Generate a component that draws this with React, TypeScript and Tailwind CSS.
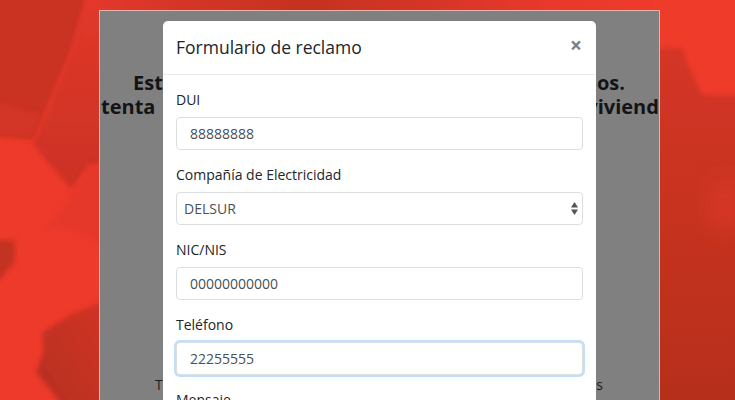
export default function App() {
  const font = { fontFamily: '"Open Sans", "Noto Sans", sans-serif' };
  const inputCls = "flex items-center h-[33px] w-full rounded-[4px] border border-[#dcdfe2] bg-white text-[14px] text-[#495057]";
  const labelCls = "block h-[21px] mb-[8px] text-[14px] leading-[21px] pt-[1px] text-[#212529]";
  return (
    <div className="relative w-[735px] h-[400px] overflow-hidden bg-[#d8342a]" style={font}>
      <svg className="absolute inset-0" width="735" height="400" viewBox="0 0 735 400">
        <defs>
          <filter id="b" x="-20%" y="-20%" width="140%" height="140%"><feGaussianBlur stdDeviation="2.5" /></filter>
          <filter id="c" x="-30%" y="-30%" width="160%" height="160%"><feGaussianBlur stdDeviation="12" /></filter>
          <linearGradient id="r" x1="0" y1="0" x2="0" y2="1">
            <stop offset="0" stopColor="#d8362a" />
            <stop offset="0.5" stopColor="#c8331f" />
            <stop offset="1" stopColor="#b62f1b" />
          </linearGradient>
          <linearGradient id="l" x1="1" y1="0" x2="0" y2="1">
            <stop offset="0" stopColor="#d33426" />
            <stop offset="1" stopColor="#b42e1e" />
          </linearGradient>
          <linearGradient id="t" x1="0" y1="0" x2="1" y2="0">
            <stop offset="0" stopColor="#e5382b" />
            <stop offset="0.12" stopColor="#d83628" />
            <stop offset="0.38" stopColor="#c5321f" />
            <stop offset="0.6" stopColor="#d63527" />
            <stop offset="0.8" stopColor="#e8392b" />
            <stop offset="1" stopColor="#ee3a2b" />
          </linearGradient>
          <linearGradient id="u" x1="0" y1="0" x2="0" y2="1">
            <stop offset="0" stopColor="#e2382a" />
            <stop offset="1" stopColor="#cb3224" />
          </linearGradient>
        </defs>
        <rect x="0" y="0" width="735" height="400" fill="#ee3a2b" />
        <path d="M-10 -10H90L72 50L48 105L33 140L-10 135Z" fill="#ca3224" filter="url(#b)" />
        <path d="M-10 100L30 112L42 115L33 135L-10 135Z" fill="#d33527" filter="url(#b)" />
        <path d="M88 -10H110V160L85 172L72 190L33 145L50 105L72 50Z" fill="url(#u)" filter="url(#b)" />
        <path d="M72 192L88 165L110 162V250L80 234L55 229L40 238Z" fill="#e63829" filter="url(#b)" />
        <path d="M-10 240H15V262L-10 290Z" fill="#c43022" filter="url(#b)" />
        <path d="M110 298L70 315L42 333L44 350L36 372L66 410H110Z" fill="url(#l)" filter="url(#b)" />
        <rect x="90" y="0" width="570" height="10" fill="url(#t)" />
        <rect x="659" y="0" width="76" height="400" fill="url(#r)" />
        <path d="M650 -10H745V95H702L695 80L688 65L682 48H650Z" fill="#ee3a2b" filter="url(#b)" />
        <ellipse cx="725" cy="205" rx="16" ry="26" fill="#d93728" filter="url(#c)" />
      </svg>

      <div className="relative ml-[99px] mt-[10px] w-[561px] h-[400px] overflow-hidden border border-[#e3b5ae] bg-[#808080] text-[#121416]">
        <div className="mt-[60px] ml-[33px] w-[492px] text-[20px] leading-[24px] font-bold [text-align:justify] [text-align-last:justify]">
          Estamos trabajando para resolver tus reclamos.
        </div>
        <div className="ml-[1px] w-[570px] text-[20px] leading-[24px] font-bold [text-align:justify] [text-align-last:justify]">
          tenta por favor ingresar todos los datos de tu vivienda
        </div>
        <div className="mt-[255px] ml-[55px] w-[448px] text-[14px] leading-[21px] text-[#1c1c1c] [text-align:justify] [text-align-last:justify]">
          Tu reclamo será atendido por nuestros especialistas técnicos
        </div>
      </div>

      <div className="absolute left-[163px] top-[21px] w-[433px] rounded-[5px] bg-white">
        <div className="flex h-[54px] items-center justify-between border-b border-[#e9ecef] pl-[13px] pr-[14px]">
          <span className="text-[17.5px] text-[#212529]">Formulario de reclamo</span>
          <span className="mb-[4px] text-[21px] leading-none font-bold text-[#808080]">×</span>
        </div>
        <div className="px-[13px] pt-[13px]">
          <div className="mb-[13px]">
            <label className={labelCls}>DUI</label>
            <div className={inputCls + " pl-[13px]"}>88888888</div>
          </div>
          <div className="mb-[13px]">
            <label className={labelCls}>Compañía de Electricidad</label>
            <div className={inputCls + " justify-between pl-[7px] pr-[4px]"}>
              <span>DELSUR</span>
              <svg width="7" height="13" viewBox="0 0 7 13" fill="#555">
                <path d="M3.5 0L7 5.5H0Z" />
                <path d="M3.5 13L0 7.5H7Z" />
              </svg>
            </div>
          </div>
          <div className="mb-[13px]">
            <label className={labelCls}>NIC/NIS</label>
            <div className={inputCls + " pl-[13px]"}>00000000000</div>
          </div>
          <div className="mb-[13px]">
            <label className={labelCls}>Teléfono</label>
            <div className={inputCls + " pl-[13px] border-[#80bdff] shadow-[0_0_0_2px_#bfdffc]"}>22255555</div>
          </div>
          <label className={labelCls}>Mensaje</label>
        </div>
      </div>
    </div>
  );
}
